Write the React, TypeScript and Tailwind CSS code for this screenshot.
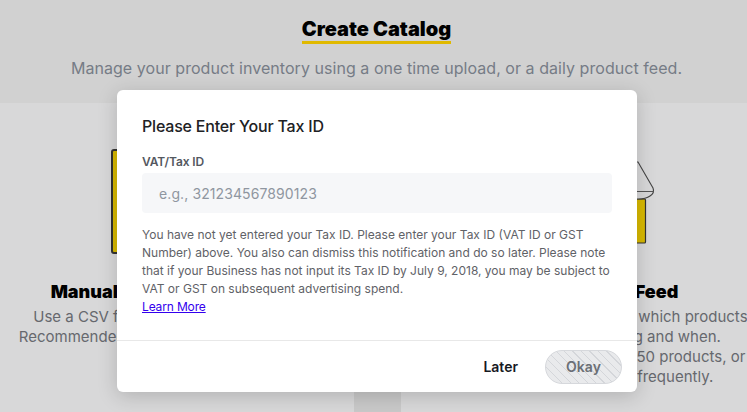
export default function App() {
  const font = { fontFamily: 'Inter, "Noto Sans", sans-serif' };
  return (
    <div style={font} className="relative w-[747px] h-[412px] overflow-hidden bg-[#c9c9c9]">
      <header className="h-[103px] bg-[#d1d1d1] flex flex-col items-center pt-[17px] pl-[6px]">
        <h1 className="text-[20px] leading-[24px] font-black text-black border-b-[3px] border-[#e0b900]">Create Catalog</h1>
        <p className="mt-[12px] text-[16px] leading-[24px] text-[#767c86] whitespace-nowrap tracking-[0.05px]">Manage your product inventory using a one time upload, or a daily product feed.</p>
      </header>
      <main className="flex h-[309px]">
        <section className="w-[354px] shrink-0 bg-[#d8d8d9] flex flex-col items-center pt-[46px] pr-[44px]">
          <div className="w-[88px] h-[105px] border-2 border-[#333] rounded-[3px] bg-[#d8b900]" />
          <h2 className="mt-[26px] text-[18px] leading-[24px] font-black text-black whitespace-nowrap">Manual Catalog Upload</h2>
          <p className="mt-[3px] text-[15px] leading-[20px] text-[#66686e] text-center whitespace-nowrap">Use a CSV file to upload products.<br />Recommended for small product lines.</p>
        </section>
        <section className="ml-[47px] w-[346px] shrink-0 bg-[#d8d8d9] flex flex-col items-center pt-[46px]">
          <svg className="self-start ml-[199px] shrink-0" width="60" height="105" viewBox="0 0 60 105">
            <rect x="20" y="50" width="25.5" height="44" rx="1" fill="#d8b900" stroke="#333" strokeWidth="1.2" />
            <path d="M20 13 H38 L53 39 Q55 44 50 47 Q46 50 38 50 H20 Z" fill="#d8d8d9" stroke="#444" strokeWidth="1.1" />
            <path d="M20 42.5 H53" fill="none" stroke="#555" strokeWidth="1" />
          </svg>
          <div className="w-[346px] flex flex-col items-center pl-[40px]">
            <h2 className="mt-[26px] text-[18px] leading-[24px] font-black text-black whitespace-nowrap">Daily Product Feed</h2>
            <p className="mt-[3px] ml-[44px] text-[15px] leading-[20px] text-[#66686e] text-center whitespace-nowrap">Automatically control which products<br />are in your catalog and when.<br />Useful for more than 50 products, or<br />if price changes frequently.</p>
          </div>
        </section>
      </main>
      <div className="absolute left-[117px] top-[90px] w-[520px] h-[302px] bg-white rounded-[6px] shadow-[0_4px_20px_rgba(0,0,0,0.18)] flex flex-col">
        <div className="px-[25px] pt-[26px] flex-1">
          <h3 className="text-[16px] leading-[20px] font-medium text-[#202124] tracking-[-0.2px]">Please Enter Your Tax ID</h3>
          <label className="block mt-[18px] text-[12px] leading-[16px] font-semibold text-[#54585f] tracking-[-0.1px]">VAT/Tax ID</label>
          <div className="mt-[3px] h-[40px] w-[470px] bg-[#f6f7f9] rounded-[4px] pl-[17px] flex items-center text-[14px] text-[#8f96a0] tracking-[0.1px]">e.g., 321234567890123</div>
          <p className="mt-[13px] w-[470px] text-[12px] leading-[18px] text-[#5f6267]">
            You have not yet entered your Tax ID. Please enter your Tax ID (VAT ID or GST Number) above. You also can dismiss this notification and do so later. Please note that if your Business has not input its Tax ID by July 9, 2018, you may be subject to VAT or GST on subsequent advertising spend.<br />
            <a className="text-[#3300ee] underline tracking-[-0.15px]" href="#">Learn More</a>
          </p>
        </div>
        <div className="h-[52px] border-t border-[#e8e8e8] flex items-center justify-end pr-[15px] gap-[27px]">
          <span className="text-[14px] font-semibold text-[#16191f]">Later</span>
          <span className="w-[77px] h-[34px] rounded-full border border-[#d6d8dc] flex items-center justify-center text-[14px] font-semibold text-[#6b6f76] bg-[repeating-linear-gradient(45deg,#e9eaec,#e9eaec_5px,#d4d6da_5px,#d4d6da_6px)]">Okay</span>
        </div>
      </div>
    </div>
  );
}
